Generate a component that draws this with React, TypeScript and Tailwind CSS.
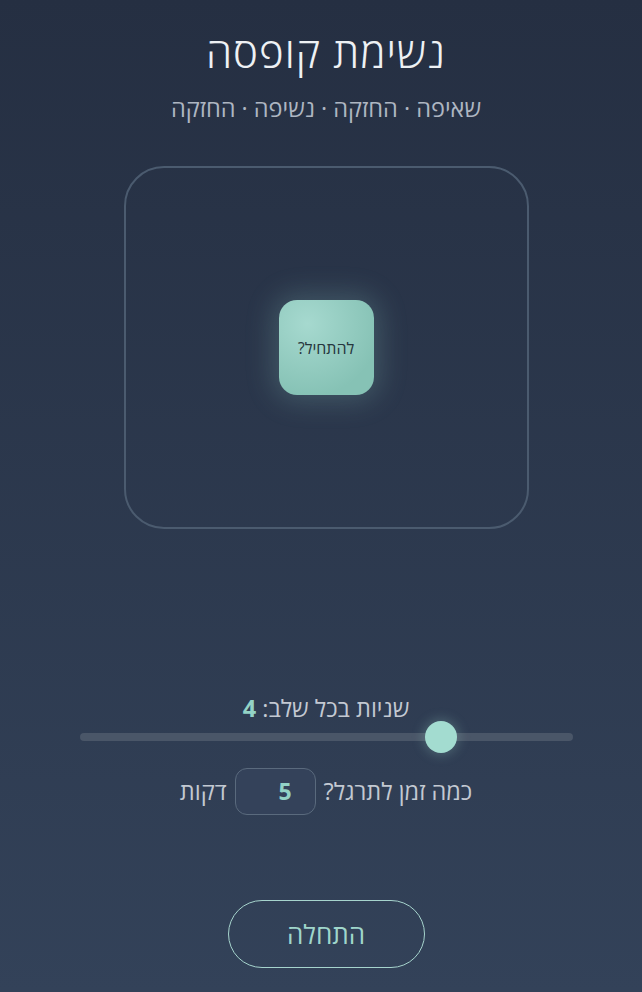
import { useState } from "react";

const MIN = 3;
const MAX = 7;

export default function App() {
  const [seconds] = useState(4);
  const [minutes] = useState(5);
  // RTL slider: fraction measured from the right edge
  const frac = (seconds - MIN) / (MAX - MIN);

  return (
    <div
      dir="rtl"
      className="flex h-[992px] w-full flex-col items-center bg-gradient-to-b from-[#252f42] to-[#334259] pl-[10px] text-[#e6eaef]"
      style={{ fontFamily: '"Open Sans", "DejaVu Sans", sans-serif' }}
    >
      <h1 className="mt-[26px] text-[42px] font-light leading-[52px] tracking-wide text-[#eef1f4]">
        נשימת קופסה
      </h1>
      <p className="mt-[16px] text-[23.5px] leading-[28px] text-[#aeb6c2]">
        שאיפה · החזקה · נשיפה · החזקה
      </p>

      <div className="mt-[44px] flex h-[363px] w-[405px] items-center justify-center rounded-[40px] border-2 border-[#4b5b6f]">
        <div className="flex h-[95px] w-[95px] items-center justify-center rounded-[18px] bg-[radial-gradient(circle_at_30%_25%,#a6d9cf,#86c2b5_75%)] shadow-[0_0_28px_6px_rgba(150,210,200,0.22)]">
          <span className="text-[16px] text-[#26363d]">להתחיל?</span>
        </div>
      </div>

      <div className="mt-[165px] text-[23.5px] leading-[28px] text-[#c3c9d2]">
        שניות בכל שלב: <span className="font-bold text-[#93d3c6]">{seconds}</span>
      </div>

      <div className="relative -mt-px h-[32px] w-[493px]">
        <div className="absolute left-0 right-0 top-[12px] h-[8px] rounded-full bg-[#4a5668]" />
        <div
          className="absolute top-0 h-[32px] w-[32px] rounded-full bg-[#a3dcd0] shadow-[0_0_12px_2px_rgba(163,220,208,0.25)]"
          style={{ right: `calc(${frac} * (100% - 32px))` }}
        />
      </div>

      <div className="mt-[15px] flex items-center gap-[8px] text-[23.5px] text-[#c3c9d2]">
        <span>כמה זמן לתרגל?</span>
        <div className="flex h-[47px] w-[81px] items-center justify-center rounded-[12px] border border-[#5a6a7d] bg-[#34425a]">
          <span className="pl-[20px] text-[23px] font-bold text-[#93d3c6]">{minutes}</span>
        </div>
        <span>דקות</span>
      </div>

      <button className="mt-[85px] flex h-[68px] w-[197px] items-center justify-center rounded-full border border-[#a6d4cd] text-[26px] font-medium text-[#9fd6cb]">
        התחלה
      </button>
    </div>
  );
}
